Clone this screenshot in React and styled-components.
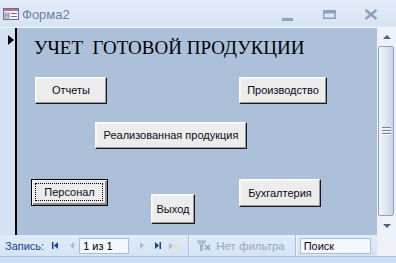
import React from "react";
import styled, { createGlobalStyle } from "styled-components";

const GlobalStyle = createGlobalStyle`
  html, body {
    margin: 0;
    padding: 0;
    overflow: hidden;
    background: #cddff4;
  }
  * { box-sizing: border-box; }
`;

const Window = styled.div`
  width: 396px;
  height: 263px;
  display: flex;
  flex-direction: column;
  font-family: "Liberation Sans", Arial, sans-serif;
  background: #cddff4;
`;

const TitleBar = styled.div`
  height: 28px;
  flex: none;
  display: flex;
  align-items: center;
  padding: 1px 4px 0 3px;
  background: linear-gradient(#e4edf8, #d6e3f3);
  border-bottom: 1px solid #eef4fb;
`;

const TitleIcon = styled.svg`
  width: 16px;
  height: 12px;
  flex: none;
`;

const TitleText = styled.span`
  margin-left: 3px;
  font-size: 13px;
  color: #6c80a2;
  flex: 1;
`;

const ControlBox = styled.div`
  width: 42px;
  height: 20px;
  display: flex;
  align-items: ${(p) => (p.$bottom ? "flex-end" : "center")};
  justify-content: center;
  padding-bottom: ${(p) => (p.$bottom ? "3px" : "0")};
`;

const Body = styled.div`
  flex: 1;
  display: flex;
  min-height: 0;
`;

const MainColumn = styled.div`
  flex: 1;
  display: flex;
  flex-direction: column;
`;

const FormRow = styled.div`
  flex: 1;
  display: flex;
`;

const RecordSelector = styled.div`
  width: 17px;
  flex: none;
  background: #d4e3f4;
  border-right: 2px solid #000;
  padding: 3px 0 0 8px;
`;

const Canvas = styled.div`
  flex: 1;
  position: relative;
  background: #adc0da;
`;

const Heading = styled.div`
  position: absolute;
  left: 17px;
  top: 9px;
  font-family: "Liberation Serif", "DejaVu Serif", "Times New Roman", serif;
  font-size: 19px;
  line-height: normal;
  color: #000;
  white-space: pre;
`;

const FormButton = styled.div`
  position: absolute;
  left: ${(p) => p.$x}px;
  top: ${(p) => p.$y}px;
  width: ${(p) => p.$w}px;
  height: ${(p) => p.$h}px;
  display: flex;
  align-items: center;
  justify-content: center;
  padding-bottom: 1px;
  font-size: 11px;
  color: #0a0a20;
  background: #ececec;
  border: 1px solid;
  border-color: ${(p) => (p.$focused ? "#000" : "#fff #1a1a1a #1a1a1a #fff")};
  box-shadow: ${(p) =>
    p.$focused
      ? "inset 1px 1px #fff, inset -2px -2px #8a8a8a"
      : "inset -1px -1px #9a9a9a, inset 1px 1px #f6f6f6"};

  &::after {
    content: "";
    display: ${(p) => (p.$focused ? "block" : "none")};
    position: absolute;
    inset: 3px 4px 4px 3px;
    border: 1px dotted #000;
  }
`;

const NavBar = styled.div`
  height: 22px;
  flex: none;
  display: flex;
  align-items: center;
  padding-left: 5px;
  background: linear-gradient(#e1ebf8, #d4e3f5);
  border-bottom: 1px solid #a2bfe4;
  font-size: 11px;
`;

const NavLabel = styled.span`
  color: #15428b;
  margin-right: 8px;
`;

const NavIcon = styled.svg`
  flex: none;
  margin-left: ${(p) => p.$ml || 0}px;
`;

const NavInput = styled.div`
  width: ${(p) => p.$w}px;
  height: 16px;
  margin-left: ${(p) => p.$ml}px;
  display: flex;
  align-items: center;
  padding-left: 3px;
  background: #f4f7fc;
  border: 1px solid #a9bedb;
  color: ${(p) => p.$color || "#000"};
  font-size: 11px;
  flex: none;
`;

const Separator = styled.div`
  width: 1px;
  height: 21px;
  margin-left: ${(p) => p.$ml}px;
  background: #a6c0e0;
  box-shadow: 1px 0 #eef4fb;
  flex: none;
`;

const FilterText = styled.span`
  color: #97a7bd;
  margin-left: 4px;
  font-size: 11.5px;
`;

const ScrollBar = styled.div`
  width: 19px;
  flex: none;
  display: flex;
  flex-direction: column;
  background: #eef1f7;
  border-bottom: 1px solid #a2bfe4;
`;

const ArrowBox = styled.div`
  height: 18px;
  flex: none;
  display: flex;
  align-items: center;
  justify-content: center;
  padding-left: 1px;
`;

const Thumb = styled.div`
  flex: 1;
  margin: 0 2px 1px 1px;
  border: 1px solid #8ea3c3;
  border-radius: 2px;
  background: linear-gradient(90deg, #f4f7fb, #d9e2ef 60%, #c9d5e6);
  display: flex;
  flex-direction: column;
  align-items: center;
  justify-content: center;
  gap: 1px;
`;

const GripLine = styled.div`
  width: 9px;
  height: 1px;
  background: #6f83a3;
  box-shadow: 0 1px #f4f7fb;
  margin-bottom: 1px;
`;

const Corner = styled.div`
  height: 21px;
  flex: none;
  background: #eef1f7;
`;

const BottomStrip = styled.div`
  height: 6px;
  flex: none;
  background: #cddff4;
`;

const buttons = [
  { label: "Отчеты", x: 18, y: 49, w: 72, h: 27 },
  { label: "Производство", x: 222, y: 49, w: 88, h: 27 },
  { label: "Реализованная продукция", x: 78, y: 94, w: 152, h: 27 },
  { label: "Персонал", x: 14, y: 151, w: 77, h: 27, focused: true },
  { label: "Выход", x: 134, y: 166, w: 44, h: 30 },
  { label: "Бухгалтерия", x: 222, y: 151, w: 82, h: 28 },
];

export default function App() {
  return (
    <>
      <GlobalStyle />
      <Window>
        <TitleBar>
          <TitleIcon viewBox="0 0 16 12">
            <rect x="0.5" y="0.5" width="15" height="11" fill="#f4f6fb" stroke="#6a6e9c" />
            <rect x="1" y="1" width="14" height="2" fill="#c46d86" />
            <rect x="2" y="5" width="4" height="2" fill="none" stroke="#6a6e9c" strokeWidth="0.8" />
            <rect x="2" y="8" width="4" height="2" fill="none" stroke="#6a6e9c" strokeWidth="0.8" />
            <rect x="8" y="5" width="6" height="1" fill="#6a6e9c" />
            <rect x="8" y="8" width="6" height="1" fill="#6a6e9c" />
          </TitleIcon>
          <TitleText>Форма2</TitleText>
          <ControlBox $bottom>
            <svg width="11" height="3" viewBox="0 0 11 3">
              <rect width="11" height="3" fill="#8ca1c0" />
            </svg>
          </ControlBox>
          <ControlBox>
            <svg width="13" height="9" viewBox="0 0 13 9">
              <path d="M0 0h13v9H0z M1.5 3.5v4h10v-4z" fill="#8ca1c0" fillRule="evenodd" />
            </svg>
          </ControlBox>
          <ControlBox>
            <svg width="14" height="11" viewBox="0 0 14 11">
              <path d="M1.5 1l11 9M12.5 1l-11 9" stroke="#8ca1c0" strokeWidth="2.6" />
            </svg>
          </ControlBox>
        </TitleBar>
        <Body>
          <MainColumn>
            <FormRow>
              <RecordSelector>
                <svg width="6" height="10" viewBox="0 0 6 10">
                  <path d="M0 0L6 5L0 10z" fill="#000" />
                </svg>
              </RecordSelector>
              <Canvas>
                <Heading>УЧЕТ  ГОТОВОЙ ПРОДУКЦИИ</Heading>
                {buttons.map((b) => (
                  <FormButton
                    key={b.label}
                    $x={b.x}
                    $y={b.y}
                    $w={b.w}
                    $h={b.h}
                    $focused={b.focused}
                  >
                    {b.label}
                  </FormButton>
                ))}
              </Canvas>
            </FormRow>
            <NavBar>
              <NavLabel>Запись:</NavLabel>
              <NavIcon width="6" height="7" viewBox="0 0 6 7">
                <rect x="0" y="0" width="1.5" height="7" fill="#15428b" />
                <path d="M6 0L2 3.5L6 7z" fill="#15428b" />
              </NavIcon>
              <NavIcon width="4" height="7" viewBox="0 0 4 7" $ml={12}>
                <path d="M4 0L0 3.5L4 7z" fill="#a9bcd6" />
              </NavIcon>
              <NavInput $w={50} $ml={5}>1 из 1</NavInput>
              <NavIcon width="4" height="7" viewBox="0 0 4 7" $ml={11}>
                <path d="M0 0L4 3.5L0 7z" fill="#a9bcd6" />
              </NavIcon>
              <NavIcon width="6" height="7" viewBox="0 0 6 7" $ml={11}>
                <path d="M0 0L4 3.5L0 7z" fill="#15428b" />
                <rect x="4.5" y="0" width="1.5" height="7" fill="#15428b" />
              </NavIcon>
              <NavIcon width="10" height="8" viewBox="0 0 10 8" $ml={8}>
                <path d="M0 0.5L4 4L0 7.5z" fill="#a9bcd6" />
                <circle cx="7.5" cy="4" r="2.2" fill="#eed9a0" />
                <circle cx="7.5" cy="4" r="1" fill="#f7eccb" />
              </NavIcon>
              <Separator $ml={9} />
              <NavIcon width="16" height="12" viewBox="0 0 16 12" $ml={7}>
                <path d="M1 1h9L6.5 5v5L4.5 11V5z" fill="#b7c4d6" stroke="#93a3ba" strokeWidth="0.8" />
                <path d="M9 5l5 5M14 5l-5 5" stroke="#93a3ba" strokeWidth="1.6" />
              </NavIcon>
              <FilterText>Нет фильтра</FilterText>
              <Separator $ml={10} />
              <NavInput $w={71} $ml={4} $color="#1a0018">Поиск</NavInput>
            </NavBar>
          </MainColumn>
          <ScrollBar>
            <ArrowBox>
              <svg width="8" height="4" viewBox="0 0 8 4">
                <path d="M0 4L4 0L8 4z" fill="#4a5e83" />
              </svg>
            </ArrowBox>
            <Thumb>
              <GripLine />
              <GripLine />
              <GripLine />
            </Thumb>
            <ArrowBox>
              <svg width="8" height="4" viewBox="0 0 8 4">
                <path d="M0 0L4 4L8 0z" fill="#4a5e83" />
              </svg>
            </ArrowBox>
            <Corner />
          </ScrollBar>
        </Body>
        <BottomStrip />
      </Window>
    </>
  );
}
